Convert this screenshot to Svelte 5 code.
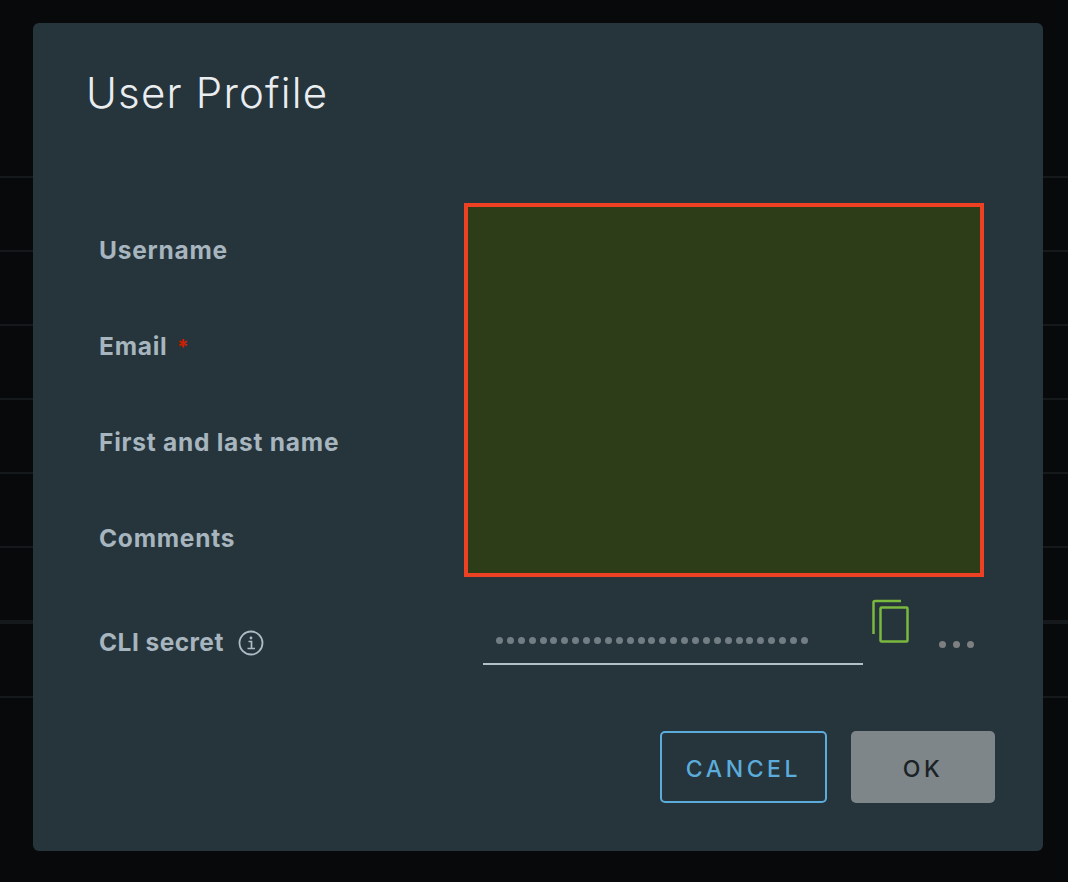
<script lang="ts">
    const backdropRows = [178, 74, 74, 74, 74, 74, 76, 74];
    const labels = [
        { text: "Username", required: false },
        { text: "Email", required: true },
        { text: "First and last name", required: false },
        { text: "Comments", required: false },
    ];
    const secretDots = Array(29).fill(0);
</script>

<div class="page">
    <div class="backdrop">
        {#each backdropRows as height, i}
            <div class="backdrop-row" class:thick={i === 6} style="height: {height}px"></div>
        {/each}
    </div>

    <div class="modal">
        <h1 class="title">User Profile</h1>

        <div class="form-top">
            <div class="labels">
                {#each labels as label}
                    <div class="label">
                        {label.text}
                        {#if label.required}<span class="required">*</span>{/if}
                    </div>
                {/each}
            </div>
            <div class="redacted"></div>
        </div>

        <div class="secret-row">
            <div class="secret-label">
                <span>CLI secret</span>
                <svg class="info" width="26" height="26" viewBox="0 0 26 26" fill="none" stroke="#adbbc4">
                    <circle cx="13" cy="13" r="11.5" stroke-width="1.8" />
                    <circle cx="13" cy="8" r="1.4" fill="#adbbc4" stroke="none" />
                    <path d="M10.5 11.5H13.5V18.5M9.5 18.5H17" stroke-width="1.7" />
                </svg>
            </div>
            <div class="secret-input">
                {#each secretDots as _}<i class="dot"></i>{/each}
            </div>
            <svg class="copy" width="38" height="44" viewBox="0 0 38 44" fill="none" stroke="#7ab83e" stroke-width="2.5">
                <path d="M1.5 35V3.5Q1.5 2 3 2H29" />
                <rect x="8.5" y="8.5" width="27" height="34" rx="1" />
            </svg>
            <div class="more">
                <i></i><i></i><i></i>
            </div>
        </div>

        <div class="actions">
            <button type="button" class="btn btn-cancel">CANCEL</button>
            <button type="button" class="btn btn-ok">OK</button>
        </div>
    </div>
</div>

<style>
    :global(body) {
        margin: 0;
        background: #07090b;
    }

    .page {
        position: relative;
        width: 1068px;
        height: 882px;
        overflow: hidden;
        background: #07090b;
        font-family: Inter, "Open Sans", sans-serif;
    }

    .backdrop-row {
        box-sizing: border-box;
        border-bottom: 2px solid #15191c;
    }

    .backdrop-row.thick {
        border-bottom-width: 4px;
    }

    .modal {
        position: absolute;
        top: 23px;
        left: 33px;
        box-sizing: border-box;
        width: 1010px;
        height: 828px;
        padding: 43px 48px 0 54px;
        background: #26343c;
        border-radius: 6px;
    }

    .title {
        margin: 0 0 0 -1px;
        height: 54px;
        font-size: 42px;
        line-height: 54px;
        font-weight: 300;
        letter-spacing: 1.2px;
        color: #eaedf0;
    }

    .form-top {
        display: flex;
        margin-top: 83px;
    }

    .labels {
        width: 365px;
        margin-left: 12px;
        display: flex;
        flex-direction: column;
        gap: 64px;
        padding-top: 31px;
    }

    .label {
        height: 32px;
        line-height: 32px;
        font-size: 24.5px;
        font-weight: 700;
        letter-spacing: 0.75px;
        color: #a6b5be;
    }

    .required {
        margin-left: 3px;
        font-size: 21px;
        color: #c92100;
    }

    .redacted {
        box-sizing: border-box;
        width: 520px;
        height: 374px;
        background: #2c3d17;
        border: 4px solid #ee4022;
    }

    .secret-row {
        display: flex;
        align-items: flex-start;
        margin-top: 20px;
        margin-left: 12px;
    }

    .secret-label {
        display: flex;
        align-items: center;
        gap: 14px;
        width: 384px;
        height: 32px;
        margin-top: 29px;
        font-size: 24.5px;
        font-weight: 700;
        letter-spacing: 0.45px;
        color: #a6b5be;
    }

    .info {
        margin-top: 2px;
    }

    .secret-input {
        box-sizing: border-box;
        display: flex;
        align-items: center;
        gap: 3.9px;
        width: 380px;
        height: 68px;
        padding: 20px 0 0 13px;
        border-bottom: 2px solid #b4c0c8;
    }

    .dot {
        width: 7px;
        height: 7px;
        border-radius: 50%;
        background: #737d84;
    }

    .copy {
        margin: 2px 0 0 9px;
    }

    .more {
        display: flex;
        gap: 7px;
        margin: 44px 0 0 29px;
    }

    .more i {
        width: 7px;
        height: 7px;
        border-radius: 50%;
        background: #7d7f81;
    }

    .actions {
        display: flex;
        justify-content: flex-end;
        gap: 24px;
        margin-top: 66px;
    }

    .btn {
        box-sizing: border-box;
        height: 72px;
        padding-top: 4px;
        border-radius: 5px;
        font-family: inherit;
        font-size: 23px;
        font-weight: 500;
        letter-spacing: 3.6px;
    }

    .btn-cancel {
        width: 167px;
        background: transparent;
        border: 2px solid #5bacdb;
        color: #5bacdb;
    }

    .btn-ok {
        width: 144px;
        background: #7e8689;
        border: none;
        color: #1b2226;
    }
</style>
